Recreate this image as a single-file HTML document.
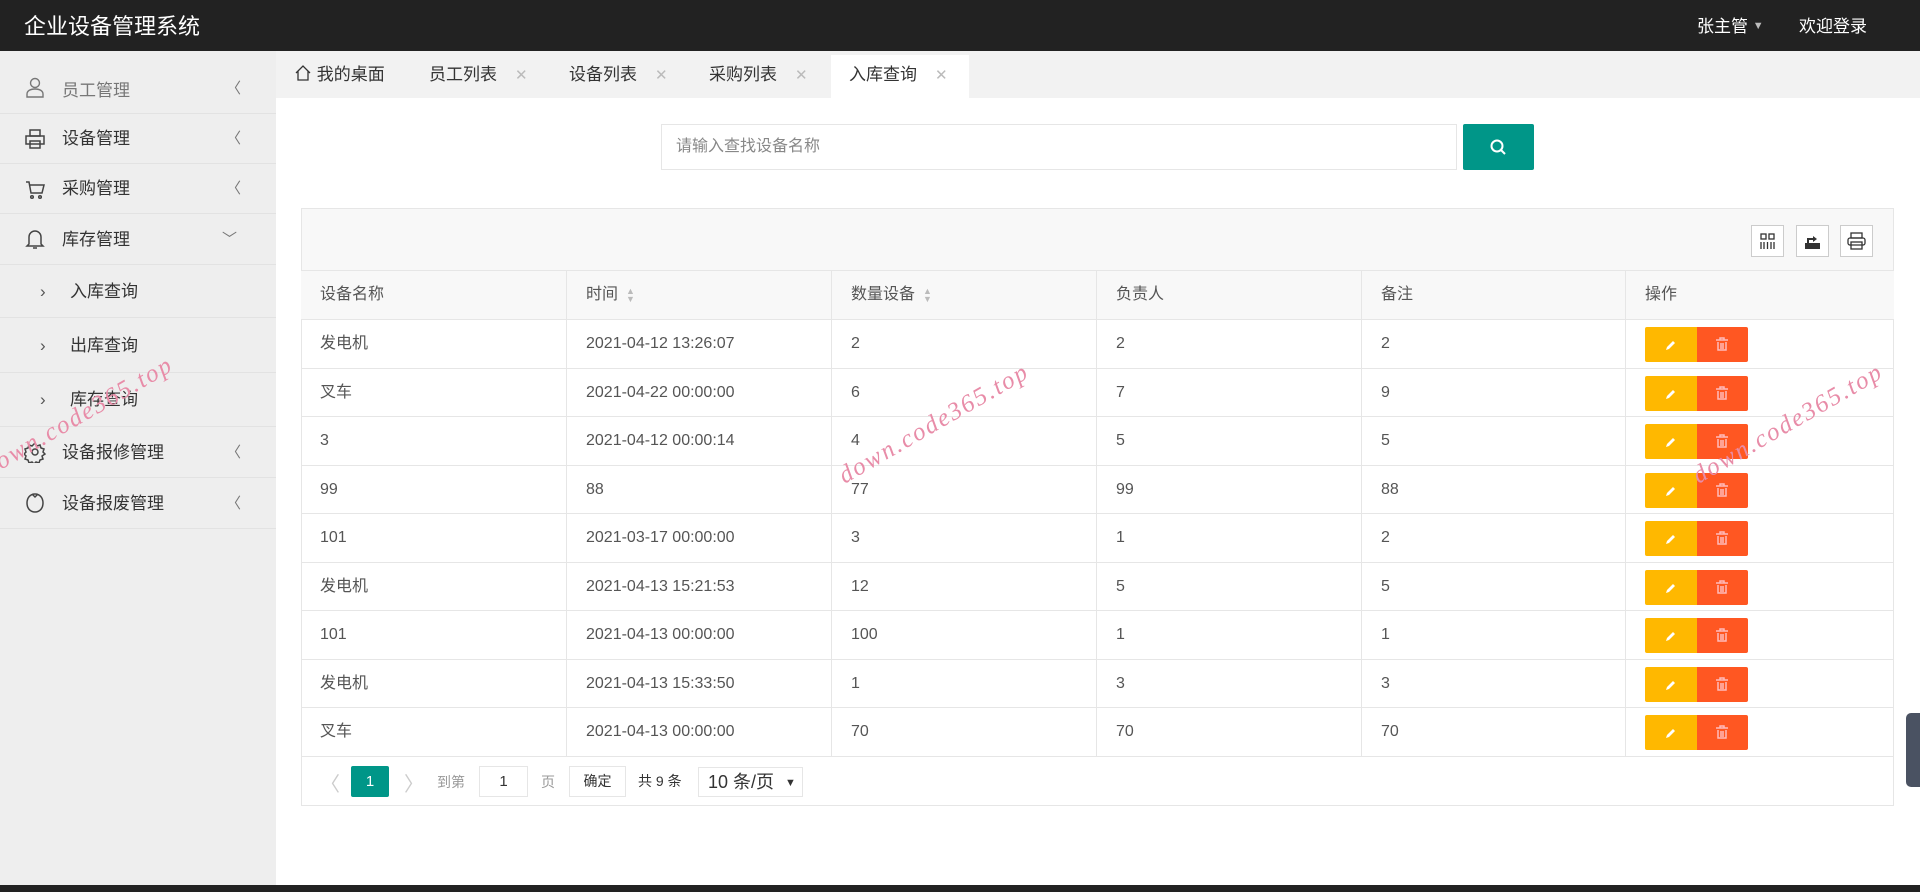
<!DOCTYPE html>
<html><head><meta charset="utf-8"><style>
*{margin:0;padding:0;box-sizing:border-box}
body{width:1920px;height:892px;overflow:hidden;background:#fff;font-family:"Liberation Sans","Noto Sans CJK SC",sans-serif;color:#666;position:relative}
.abs{position:absolute}
#hd{left:0;top:0;width:1920px;height:51px;background:#222}
#side{left:0;top:51px;width:276px;height:834px;background:#eeeeee}
.mi{position:absolute;left:0;width:276px;border-bottom:1px solid #e2e2e2;font-size:17px;color:#333}
.mi .t{position:absolute;left:62px}
.mi .ic{position:absolute;left:24px;width:22px;height:22px}
.mi .ar{position:absolute;left:226px;color:#777;font-size:15px}
.tab{position:absolute;top:51px;height:47px;line-height:47px;font-size:17px;color:#333}
.tab .x{color:#bbb;margin-left:18px;font-size:15px}
.row{position:absolute;left:301px;width:1593px;border-bottom:1px solid #e6e6e6;font-size:16px;color:#555}
.c{position:absolute;top:0;height:100%;border-left:1px solid #e6e6e6;padding-left:19px;line-height:48px;width:265px;white-space:nowrap}
.wm{position:absolute;color:#e88ca8;font-family:"Liberation Serif",serif;font-style:italic;font-size:25px;letter-spacing:2px;transform:rotate(-30deg);transform-origin:left bottom;white-space:nowrap}
.tb{position:absolute;top:225px;width:33px;height:32px;border:1px solid #ccc;background:#fff}
.so{display:inline-block;vertical-align:middle;color:#bbb;font-size:9px;line-height:8px;margin-left:8px}
</style></head><body>
<div id="hd" class="abs">
<div class="abs" style="left:24px;top:9px;color:#fff;font-size:22px">企业设备管理系统</div>
<div class="abs" style="left:1697px;top:12px;color:#fff;font-size:17px">张主管 <span style="font-size:11px;color:#bbb;position:relative;top:-3px">▼</span></div>
<div class="abs" style="left:1799px;top:12px;color:#fff;font-size:17px">欢迎登录</div>
</div>
<div id="side" class="abs">
<div class="mi" style="top:0;height:63px;line-height:63px;color:#777;padding-top:0"><svg class="ic" style="top:25px" viewBox="0 0 22 22" fill="none" stroke="#777" stroke-width="1.4"><circle cx="11" cy="7" r="4.5"/><path d="M3 21v-3c0-3 3-5 8-5s8 2 8 5v3z"/></svg><span class="t" style="top:8px">员工管理</span><span class="ar" style="top:6px">〈</span></div>
<div class="mi" style="top:63px;height:50px;line-height:50px"><svg class="ic" style="top:14px" viewBox="0 0 22 22" fill="none" stroke="#444" stroke-width="1.5"><rect x="6" y="2" width="10" height="6"/><rect x="2" y="8" width="18" height="8"/><rect x="6" y="13" width="10" height="7"/></svg><span class="t">设备管理</span><span class="ar">〈</span></div>
<div class="mi" style="top:113px;height:50px;line-height:50px"><svg class="ic" style="top:14px" viewBox="0 0 22 22" fill="none" stroke="#444" stroke-width="1.5"><path d="M2 4h3l2 11h11l2-8H6"/><circle cx="8" cy="19" r="1.3"/><circle cx="16" cy="19" r="1.3"/></svg><span class="t">采购管理</span><span class="ar">〈</span></div>
<div class="mi" style="top:163px;height:51px;line-height:51px"><svg class="ic" style="top:14px" viewBox="0 0 22 22" fill="none" stroke="#444" stroke-width="1.5"><path d="M5 16V9a6 6 0 0 1 12 0v7l2 2H3z"/><path d="M9 20h4"/></svg><span class="t">库存管理</span><span class="ar" style="left:222px">﹀</span></div>
<div class="mi" style="top:214px;height:53px;line-height:53px"><span class="t" style="left:40px;color:#555">›</span><span class="t" style="left:70px">入库查询</span></div>
<div class="mi" style="top:267px;height:55px;line-height:55px"><span class="t" style="left:40px;color:#555">›</span><span class="t" style="left:70px">出库查询</span></div>
<div class="mi" style="top:322px;height:54px;line-height:54px"><span class="t" style="left:40px;color:#555">›</span><span class="t" style="left:70px">库存查询</span></div>
<div class="mi" style="top:376px;height:51px;line-height:51px"><svg class="ic" style="top:14px" viewBox="0 0 22 22" fill="none" stroke="#444" stroke-width="1.5"><circle cx="11" cy="11" r="3"/><path d="M11 2l2 3 3-1 1 3 3 1-1 3 2 2-3 2 1 3-3 1-1 3-3-1-2 2-2-2-3 1-1-3-3-1 1-3-2-2 2-2-1-3 3-1 1-3 3 1z"/></svg><span class="t">设备报修管理</span><span class="ar">〈</span></div>
<div class="mi" style="top:427px;height:51px;line-height:51px"><svg class="ic" style="top:14px" viewBox="0 0 22 22" fill="none" stroke="#444" stroke-width="1.5"><path d="M11 2c5 0 8 4 8 9s-3 9-8 9-8-4-8-9 3-9 8-9z"/><path d="M8 2l3 3 3-3"/></svg><span class="t">设备报废管理</span><span class="ar">〈</span></div>
</div>
<div class="abs" style="left:0;top:885px;width:1920px;height:7px;background:#222"></div>
<div class="abs" style="left:276px;top:51px;width:1644px;height:47px;background:#f2f2f2"></div>
<div class="abs" style="left:831px;top:55px;width:138px;height:43px;background:#fff"></div>
<div class="tab" style="left:294px"><svg width="18" height="18" viewBox="0 0 18 18" fill="none" stroke="#333" stroke-width="1.3" style="vertical-align:-2px"><path d="M2 9l7-7 7 7M4 7v9h10V7"/></svg> 我的桌面</div>
<div class="tab" style="left:429px">员工列表<span class="x">✕</span></div>
<div class="tab" style="left:569px">设备列表<span class="x">✕</span></div>
<div class="tab" style="left:709px">采购列表<span class="x">✕</span></div>
<div class="tab" style="left:849px">入库查询<span class="x">✕</span></div>
<div class="abs" style="left:661px;top:124px;width:796px;height:46px;border:1px solid #e6e6e6;font-size:16px;color:#888;padding:0 14px;line-height:44px">请输入查找设备名称</div>
<div class="abs" style="left:1463px;top:124px;width:71px;height:46px;background:#009688;border-radius:2px"><svg style="position:absolute;left:26px;top:14px" width="19" height="19" viewBox="0 0 19 19" fill="none" stroke="#fff" stroke-width="2"><circle cx="8" cy="8" r="5.5"/><path d="M12 12l4 4"/></svg></div>
<div class="abs" style="left:301px;top:208px;width:1593px;height:598px;border:1px solid #e6e6e6"></div>
<div class="abs" style="left:302px;top:209px;width:1591px;height:62px;background:#f8f8f8;border-bottom:1px solid #e6e6e6"></div>
<div class="tb" style="left:1751px"><svg width="31" height="30" viewBox="0 0 31 30" fill="none" stroke="#333" stroke-width="1.3"><rect x="9" y="8" width="5" height="5"/><rect x="17" y="8" width="5" height="5"/><path d="M9 16v7M12 16v7M15.5 16v7M19 16v7M22 16v7"/></svg></div>
<div class="tb" style="left:1796px"><svg width="31" height="30" viewBox="0 0 31 30"><path d="M8 17h15v6H8z" fill="#333"/><path d="M11 17v-4h6" fill="none" stroke="#333" stroke-width="2"/><path d="M16 10l4 3-4 3z" fill="#333"/></svg></div>
<div class="tb" style="left:1840px"><svg width="31" height="30" viewBox="0 0 31 30" fill="none" stroke="#333" stroke-width="1.3"><rect x="10" y="7" width="11" height="5"/><rect x="7" y="12" width="17" height="7" rx="2"/><rect x="10" y="16" width="11" height="7"/></svg></div>
<div class="row" style="top:271px;height:49px;background:#f8f8f8">
<div class="c" style="left:0;border:0">设备名称</div><div class="c" style="left:265px">时间<span class="so">▲<br>▼</span></div><div class="c" style="left:530px">数量设备<span class="so">▲<br>▼</span></div><div class="c" style="left:795px">负责人</div><div class="c" style="left:1060px">备注</div><div class="c" style="left:1324px">操作</div></div>
<div id="rows"></div>
<script>
var d=[["发电机","2021-04-12 13:26:07","2","2","2"],["叉车","2021-04-22 00:00:00","6","7","9"],["3","2021-04-12 00:00:14","4","5","5"],["99","88","77","99","88"],["101","2021-03-17 00:00:00","3","1","2"],["发电机","2021-04-13 15:21:53","12","5","5"],["101","2021-04-13 00:00:00","100","1","1"],["发电机","2021-04-13 15:33:50","1","3","3"],["叉车","2021-04-13 00:00:00","70","70","70"]];
var h="";d.forEach(function(r,i){var t=320+i*48.5;h+='<div class="row" style="top:'+t+'px;height:48.5px"><div class="c" style="left:0;border:0">'+r[0]+'</div><div class="c" style="left:265px">'+r[1]+'</div><div class="c" style="left:530px">'+r[2]+'</div><div class="c" style="left:795px">'+r[3]+'</div><div class="c" style="left:1060px">'+r[4]+'</div><div class="c" style="left:1324px"><span style="position:absolute;left:19px;top:7px;width:52px;height:35px;background:#ffb800;border-radius:2px 0 0 2px"><svg style="position:absolute;left:19px;top:11px" width="14" height="14" viewBox="0 0 14 14"><path d="M2 12l1-3 6-6 2 2-6 6z" fill="#fff"/></svg></span><span style="position:absolute;left:71px;top:7px;width:51px;height:35px;background:#ff5722;border-radius:0 2px 2px 0"><svg style="position:absolute;left:18px;top:10px" width="14" height="15" viewBox="0 0 14 15" fill="none" stroke="#fbb" stroke-width="1.5"><path d="M1 3h12M5 3V1h4v2M3 5v8h8V5M6 6v6M8 6v6"/></svg></span></div></div>'});
document.getElementById("rows").innerHTML=h;
</script>
<div class="abs" style="left:320px;top:768px;font-size:20px;color:#ccc">〈</div>
<div class="abs" style="left:351px;top:766px;width:38px;height:31px;background:#009688;color:#fff;border-radius:2px;font-size:15px;text-align:center;line-height:31px">1</div>
<div class="abs" style="left:404px;top:768px;font-size:20px;color:#ccc">〉</div>
<div class="abs" style="left:437px;top:772px;font-size:14px;color:#999">到第</div>
<div class="abs" style="left:479px;top:766px;width:49px;height:31px;border:1px solid #e6e6e6;font-size:15px;color:#333;text-align:center;line-height:29px">1</div>
<div class="abs" style="left:541px;top:772px;font-size:14px;color:#999">页</div>
<div class="abs" style="left:569px;top:766px;width:57px;height:31px;border:1px solid #e6e6e6;font-size:14px;color:#333;text-align:center;line-height:29px">确定</div>
<div class="abs" style="left:638px;top:771px;font-size:14px;color:#333">共 9 条</div>
<div class="abs" style="left:698px;top:767px;width:105px;height:30px;border:1px solid #e6e6e6;font-size:18px;color:#333;padding-left:9px;line-height:28px">10 条/页 <span style="font-size:11px;margin-left:6px;position:relative;top:-2px">▼</span></div>
<div class="abs" style="left:1906px;top:713px;width:14px;height:74px;background:#4a5262;border-radius:5px 0 0 5px"></div>
<div class="wm" style="left:-8px;top:455px">down.code365.top</div>
<div class="wm" style="left:848px;top:462px">down.code365.top</div>
<div class="wm" style="left:1702px;top:462px">down.code365.top</div>
</body></html>
